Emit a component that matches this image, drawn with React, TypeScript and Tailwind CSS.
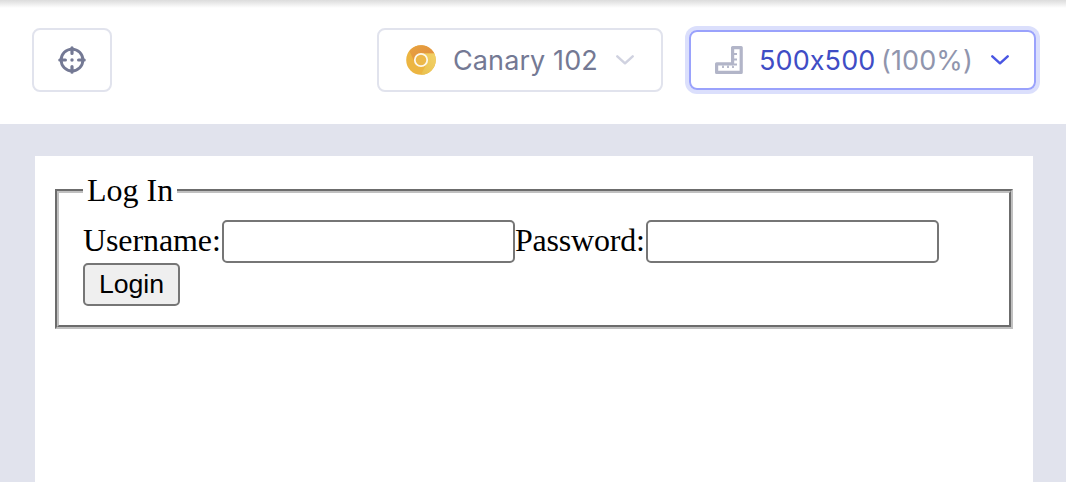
import React from 'react';

function Crosshair() {
  return (
    <svg width="28" height="28" viewBox="0 0 28 28" fill="none" stroke="#747994">
      <circle cx="14" cy="14" r="10.9" strokeWidth="2.9" />
      <path d="M14 1.8v5.6M14 20.6v5.6M1.8 14h5.6M20.6 14h5.6" strokeWidth="3.2" strokeLinecap="round" />
      <circle cx="14" cy="14" r="1.7" fill="#747994" stroke="none" />
    </svg>
  );
}

function CanaryLogo() {
  return (
    <svg width="30" height="30" viewBox="0 0 30 30">
      <defs>
        <linearGradient id="top" x1="0" y1="0" x2="1" y2="1">
          <stop offset="0" stopColor="#e8a33f" />
          <stop offset="1" stopColor="#df8a40" />
        </linearGradient>
        <linearGradient id="right" x1="0" y1="1" x2="1" y2="0">
          <stop offset="0" stopColor="#e9c04d" />
          <stop offset="1" stopColor="#f2d269" />
        </linearGradient>
      </defs>
      <circle cx="15" cy="15" r="14.8" fill="#ecb541" />
      <path d="M15 8.3h13.2A14.8 14.8 0 0 1 15 29.8L21 18z" fill="url(#right)" />
      <path d="M3.4 5.9A14.8 14.8 0 0 1 28.2 8.3H15L9 18z" fill="url(#top)" />
      <circle cx="15" cy="15" r="6.2" fill="#ecb84a" stroke="#fdf8ec" strokeWidth="1.8" />
    </svg>
  );
}

function Ruler() {
  return (
    <svg width="28" height="28" viewBox="0 0 28 28" fill="none" stroke="#b2b5c8">
      <path d="M17.6 1.6h8.6v24.8H1.6v-8.6h16z" strokeWidth="3.2" strokeLinejoin="round" />
      <path d="M19 8h3M19 13.5h3M19 18.5h3M8 19.5v2.5M13 19.5v2.5M18 19.5v2.5" strokeWidth="1.8" />
    </svg>
  );
}

function Chevron({ color }: { color: string }) {
  return (
    <svg width="20" height="12" viewBox="0 0 20 12" fill="none">
      <path d="M2.3 2.3 10 9.3l7.7-7" stroke={color} strokeWidth="2.5" strokeLinecap="round" strokeLinejoin="round" />
    </svg>
  );
}

export default function App() {
  return (
    <div className="flex h-[482px] w-[1066px] flex-col overflow-hidden bg-[#e1e3ed]">
      <header className="h-[124px] shrink-0 bg-white font-[Inter,sans-serif] text-[27px] leading-8 tracking-[0.1px] [font-feature-settings:'calt'_0]">
        <div className="h-2 bg-linear-to-b from-[#dcdcdc] to-white" />
        <div className="flex h-[104px] items-center pr-[26px] pl-8">
          <button className="flex h-16 w-20 items-center justify-center rounded-lg border-2 border-[#e1e3ed]">
            <Crosshair />
          </button>
          <button className="mr-[26px] ml-auto flex h-16 w-[286px] items-center rounded-lg border-2 border-[#e1e3ed] pl-[27px] text-[#747994]">
            <CanaryLogo />
            <span className="ml-[17px] w-[162px] pt-0.5 text-left whitespace-nowrap">Canary 102</span>
            <Chevron color="#d0d2e0" />
          </button>
          <button className="mr-1 flex h-[60px] w-[347px] items-center rounded-lg border-2 border-[#9aa2fc] pl-6 ring-4 ring-[#dbdffc]">
            <Ruler />
            <span className="ml-4 w-[122px] pt-0.5 text-left whitespace-nowrap text-[#3f4dc5]">500x500</span>
            <span className="w-[109px] pt-0.5 text-left whitespace-nowrap text-[#9095ad]">(100%)</span>
            <Chevron color="#4956e3" />
          </button>
        </div>
      </header>
      <main className="mt-8 mr-[33px] ml-[35px] flex-1 bg-white pt-4 pr-5 pl-5 font-['Liberation_Serif',serif] text-[32px] leading-[37px] text-black">
        <fieldset className="h-[157px] border-4 border-[#c0c0c0] px-6 pt-[11px] [border-style:groove]">
          <legend className="px-1">Log In</legend>
          <div className="flex h-[43px] items-center">
            <label htmlFor="user" className="w-[139px] pb-0.5 tracking-[-0.1px] whitespace-nowrap">Username:</label>
            <input id="user" className="h-[43px] w-[293px] rounded-[5px] border-2 border-[#767676] px-1" />
            <label htmlFor="pass" className="w-[131px] pb-0.5 tracking-[-0.2px] whitespace-nowrap">Password:</label>
            <input id="pass" type="password" className="h-[43px] w-[293px] rounded-[5px] border-2 border-[#767676] px-1" />
          </div>
          <button className="block h-[43px] w-[97px] rounded-[5px] border-2 border-[#767676] bg-[#efefef] font-['Liberation_Sans',sans-serif] text-[26.67px] leading-[39px]">Login</button>
        </fieldset>
      </main>
    </div>
  );
}
